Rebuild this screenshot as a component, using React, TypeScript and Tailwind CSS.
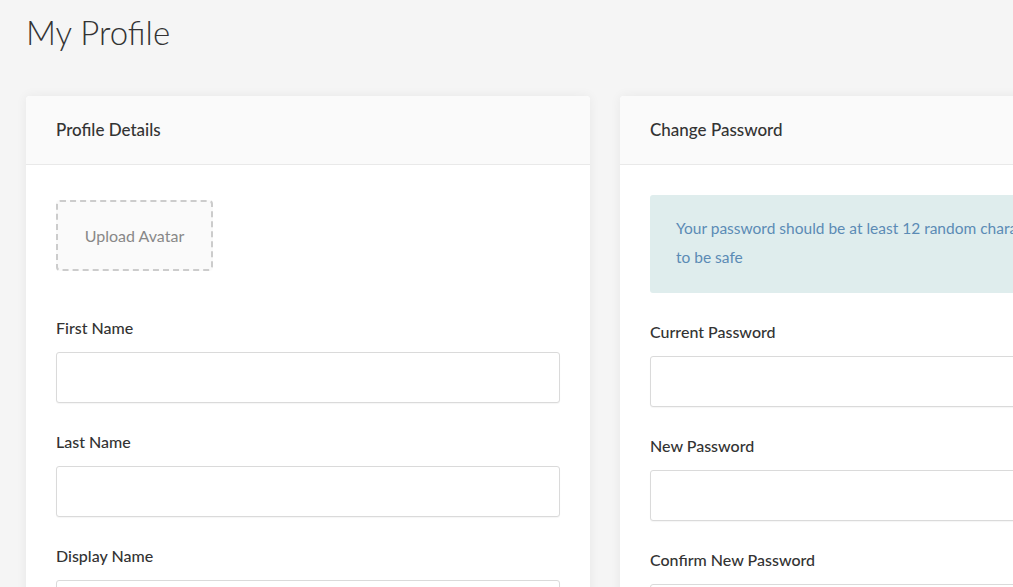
import React from 'react';

const font = { fontFamily: 'Lato, "Open Sans", sans-serif' };

function Field({ label }: { label: string }) {
  return (
    <div className="mb-[28px]">
      <label className="block text-[16px] leading-[22px] font-medium text-[#333] mb-[13px]">{label}</label>
      <input
        type="text"
        className="block w-full h-[51px] rounded-[3px] border border-[#dadada] bg-white shadow-[0_1px_1px_rgba(0,0,0,0.04)] outline-none"
      />
    </div>
  );
}

function Card({ title, children }: { title: string; children: React.ReactNode }) {
  return (
    <div className="w-[564px] shrink-0 rounded-[4px] bg-white shadow-[0_0_12px_rgba(0,0,0,0.06)]">
      <div className="h-[69px] flex items-center px-[30px] bg-[#fafafa] border-b border-[#e9e9e9] rounded-t-[4px]">
        <h2 className="text-[17px] font-medium text-[#333]">{title}</h2>
      </div>
      <div className="px-[30px]">{children}</div>
    </div>
  );
}

export default function App() {
  return (
    <div className="w-screen h-screen overflow-hidden bg-[#f5f5f5]" style={font}>
      <div className="px-[26px]">
        <h1 className="pt-[12px] text-[33px] leading-[40px] font-light text-[#333]">My Profile</h1>
        <div className="flex gap-[30px] mt-[44px]">
          <Card title="Profile Details">
            <div className="pt-[35px]">
              <div className="w-[157px] h-[71px] flex items-center justify-center rounded-[4px] border-2 border-dashed border-[#cccccc] bg-[#fafafa] text-[16px] text-[#888]">
                Upload Avatar
              </div>
              <div className="mt-[46px]">
                <Field label="First Name" />
                <Field label="Last Name" />
                <Field label="Display Name" />
              </div>
            </div>
          </Card>
          <Card title="Change Password">
            <div className="pt-[30px]">
              <div className="rounded-[3px] bg-[#dfeded] px-[26px] pt-[19px] pb-[21px] text-[15.5px] leading-[29px] text-[#5b8bb5]">
                Your password should be at least 12 random characters long
                <br />
                to be safe
              </div>
              <div className="mt-[28px]">
                <Field label="Current Password" />
                <Field label="New Password" />
                <Field label="Confirm New Password" />
              </div>
            </div>
          </Card>
        </div>
      </div>
    </div>
  );
}
